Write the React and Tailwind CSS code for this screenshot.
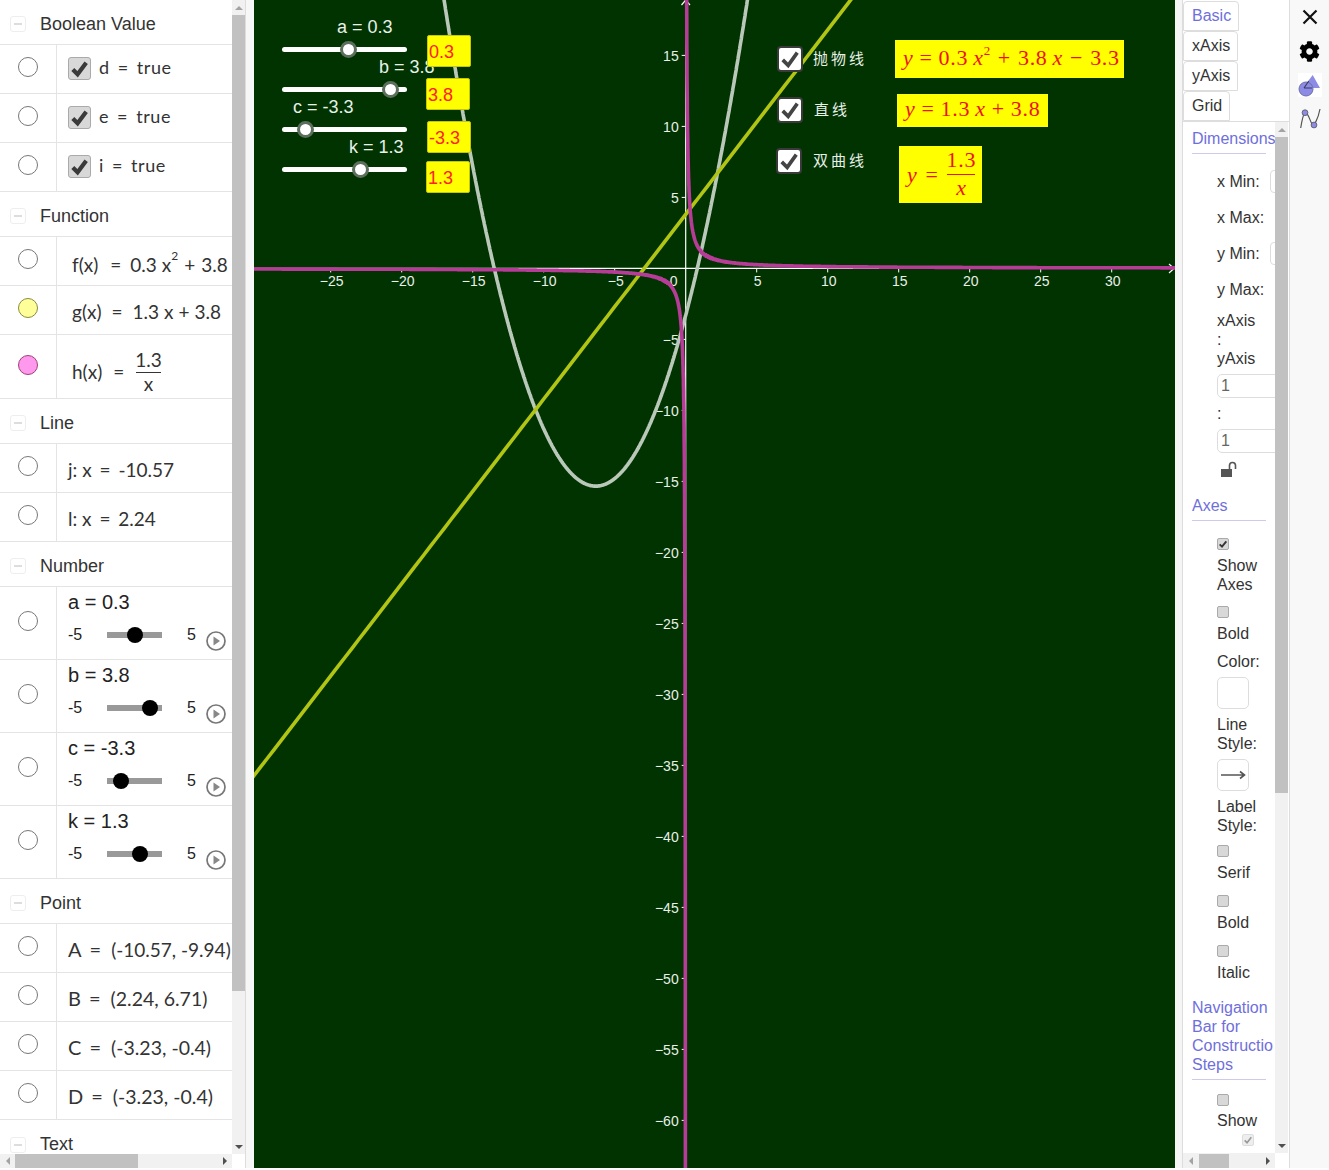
import React from "react";
import { FaCog } from "react-icons/fa";

const SX = 14.2, OX = 431.7, OY = 268.4;
const px = (u) => OX + u * SX;
const py = (v) => OY - v * SX;

function curve(f, a, b, step = 0.02) {
  const pts = [];
  for (let u = a; u <= b; u += step) {
    const v = f(u);
    if (Math.abs(v) < 200) pts.push(`${px(u).toFixed(1)},${py(v).toFixed(1)}`);
  }
  return "M" + pts.join("L");
}

function Radio({ fill = "bg-white", border = "border-[#777]" }) {
  return <div className={`w-5 h-5 rounded-full border ${border} ${fill}`} />;
}

function MiniCheck({ on, className = "" }) {
  return (
    <div className={`w-[12px] h-[12px] rounded-[2px] border border-[#aaa] bg-[#d8d8d8] flex items-center justify-center ${className}`}>
      {on && (
        <svg viewBox="0 0 12 12" className="w-[10px] h-[10px]">
          <path d="M2 6.5 L4.8 9.2 L10 2.8" fill="none" stroke="#333" strokeWidth="2.2" />
        </svg>
      )}
    </div>
  );
}

function Header({ title, height = "h-[45px]", pad = "pt-[4px]" }) {
  return (
    <div className={`${height} ${pad} flex items-center border-b border-[#e4e4e4] shrink-0`}>
      <div className="ml-[10px] w-[16px] h-[16px] rounded-[3px] border border-[#eee] flex items-center justify-center">
        <div className="w-[8px] h-[2px] bg-[#ddd]" />
      </div>
      <span className="ml-[14px] text-[18px] text-[#333]">{title}</span>
    </div>
  );
}

function Row({ height = "h-[49px]", radio, radioMt = "mt-[-4px]", children }) {
  return (
    <div className={`${height} flex border-b border-[#e4e4e4] shrink-0`}>
      <div className="w-[57px] border-r border-[#e4e4e4] flex items-center justify-center shrink-0">
        <div className={radioMt}>{radio || <Radio />}</div>
      </div>
      <div className="flex-1 min-w-0 overflow-hidden">{children}</div>
    </div>
  );
}

const mathFont = "font-['Lato'] text-[#333] whitespace-nowrap";

function BoolRow({ name }) {
  return (
    <Row>
      <div className="h-full flex items-center pl-[11px]">
        <div className="w-[23px] h-[23px] rounded-[3px] border border-[#aaa] bg-[#d8d8d8] flex items-center justify-center mt-[-2px] shrink-0">
          <svg viewBox="0 0 22 22" className="w-[21px] h-[21px]">
            <path d="M4 12 L9 17 L18 5" fill="none" stroke="#3a3a3a" strokeWidth="4.4" />
          </svg>
        </div>
        <span className={`${mathFont} text-[18px] ml-[8px] mt-[-4px] tracking-[0.6px]`}>
          {name}
          <span className="mx-[8px]">=</span>
          true
        </span>
      </div>
    </Row>
  );
}

function SliderRow({ label, pos }) {
  return (
    <Row height="h-[73px]">
      <div className="relative h-full pl-[11px]">
        <div className="text-[20px] leading-[23px] mt-[4px] text-[#222]">{label}</div>
        <div className="flex items-center mt-[11px] h-[19px] text-[16px] text-[#222]">
          <span className="w-[39px]">-5</span>
          <div className="relative w-[55px] h-[6px] bg-[#999]">
            <div className="absolute top-[-5px] w-[16px] h-[16px] rounded-full bg-black" style={{ left: pos - 8 }} />
          </div>
          <span className="ml-[25px]">5</span>
          <svg viewBox="0 0 20 20" className="w-[20px] h-[20px] ml-[10px] mt-[12px]">
            <circle cx="10" cy="10" r="9" fill="white" stroke="#777" strokeWidth="1.7" />
            <path d="M7.5 5.5 L14 10 L7.5 14.5 Z" fill="#888" />
          </svg>
        </div>
      </div>
    </Row>
  );
}

function PointRow({ name, val, valClass = "text-[19.5px]" }) {
  return (
    <Row>
      <div className={`h-full flex items-center pl-[11px] ${mathFont} text-[20px]`}>
        <span className="mt-[2px]">
          {name}
          <span className="ml-[8px] mr-[10px]">=</span>
          <span className={valClass}>{val}</span>
        </span>
      </div>
    </Row>
  );
}

function FuncText({ children, mt = "mt-[8px]" }) {
  return <div className={`h-full flex items-center pl-[15px] ${mathFont} text-[19px]`}><span className={mt}>{children}</span></div>;
}

function VScroll({ thumbH }) {
  return (
    <div className="relative w-[13px] h-full bg-[#f1f1f1] shrink-0 flex flex-col">
      <div className="h-[15px] flex items-center justify-center shrink-0">
        <div className="w-0 h-0 border-x-[4px] border-x-transparent border-b-[4px] border-b-[#a3a3a3]" />
      </div>
      <div className="bg-[#c1c1c1] shrink-0" style={{ height: thumbH }} />
      <div className="flex-1" />
      <div className="h-[15px] flex items-center justify-center shrink-0">
        <div className="w-0 h-0 border-x-[4px] border-x-transparent border-t-[4px] border-t-[#505050]" />
      </div>
    </div>
  );
}

function HScroll({ thumbLeft, thumbW }) {
  return (
    <div className="h-full flex items-center bg-[#f1f1f1]">
      <div className="flex items-center justify-center shrink-0" style={{ width: thumbLeft }}>
        <div className="w-0 h-0 border-y-[4px] border-y-transparent border-r-[4px] border-r-[#a3a3a3]" />
      </div>
      <div className="h-[14px] bg-[#c1c1c1] shrink-0" style={{ width: thumbW }} />
      <div className="flex-1" />
      <div className="w-[15px] flex items-center justify-center shrink-0">
        <div className="w-0 h-0 border-y-[4px] border-y-transparent border-l-[4px] border-l-[#505050]" />
      </div>
    </div>
  );
}

function LeftPanel() {
  return (
    <div className="w-[246px] shrink-0 h-full flex flex-col border-r border-[#ddd]">
      <div className="flex flex-1 min-h-0">
        <div className="w-[232px] h-full overflow-hidden flex flex-col shrink-0 bg-white">
          <Header title="Boolean Value" />
          <BoolRow name="d" />
          <BoolRow name="e" />
          <BoolRow name="i" />
          <Header title="Function" />
          <Row>
            <FuncText>
              <span className="mr-[12px]">f(x)</span>
              <span className="mr-[9px]">=</span>
              0.3 x<sup className="text-[12px] align-[6px] leading-none">2</sup>
              <span className="mx-[6px]">+</span>3.8
            </FuncText>
          </Row>
          <Row radio={<Radio fill="bg-[#ffff99]" border="border-[#8a8a40]" />}>
            <FuncText mt="mt-[4px]">
              <span className="mr-[10px]">g(x)</span>
              <span className="mr-[10px]">=</span>
              1.3 x<span className="mx-[5px]">+</span>3.8
            </FuncText>
          </Row>
          <Row height="h-[64px]" radio={<Radio fill="bg-[#ff99ee]" border="border-[#a0407a]" />}>
            <div className={`h-full flex items-center pl-[15px] ${mathFont} text-[19px]`}>
              <span className="mr-[11px] mt-[12px]">h(x)</span>
              <span className="mr-[11px] mt-[12px]">=</span>
              <div className="flex flex-col items-center mt-[8px]">
                <span className="leading-[25px]">1.3</span>
                <div className="w-[25px] h-px bg-[#333]" />
                <span className="leading-[22px]">x</span>
              </div>
            </div>
          </Row>
          <Header title="Line" />
          <Row><div className={`h-full flex items-center pl-[11px] ${mathFont} text-[19px]`}><span className="mt-[4px]">j: x <span className="mx-[3px]">=</span> -10.57</span></div></Row>
          <Row><div className={`h-full flex items-center pl-[11px] ${mathFont} text-[19px]`}><span className="mt-[4px]">l: x <span className="mx-[3px]">=</span> 2.24</span></div></Row>
          <Header title="Number" />
          <SliderRow label="a = 0.3" pos={28} />
          <SliderRow label="b = 3.8" pos={42.5} />
          <SliderRow label="c = -3.3" pos={14} />
          <SliderRow label="k = 1.3" pos={32.5} />
          <Header title="Point" />
          <PointRow name="A" val="(-10.57, -9.94)" valClass="text-[19px]" />
          <PointRow name="B" val="(2.24, 6.71)" />
          <PointRow name="C" val="(-3.23, -0.4)" />
          <PointRow name="D" val="(-3.23, -0.4)" />
          <Header title="Text" height="h-[48px]" pad="pt-[2px]" />
        </div>
        <VScroll thumbH={976} />
      </div>
      <div className="h-[14px] flex shrink-0">
        <div className="w-[232px]"><HScroll thumbLeft={15} thumbW={123} /></div>
      </div>
    </div>
  );
}

function YellowBox({ children, className }) {
  return <div className={`absolute bg-[#ffff00] border border-[#c8c800] rounded-[2px] text-[#ff2020] text-[18px] leading-[32px] pl-[1px] ${className}`}>{children}</div>;
}

function CanvasSlider({ top, knob }) {
  return (
    <div className="absolute left-[28px] w-[125px] h-[5px] rounded-full bg-white" style={{ top }}>
      <div className="absolute top-[-6px] w-[17px] h-[17px] rounded-full bg-white border-[3px] border-[#5c6f5c]" style={{ left: knob - 8.5 }} />
    </div>
  );
}

function CanvasCheck({ className }) {
  return (
    <div className={`absolute w-[26px] h-[26px] rounded-[4px] bg-white border-[2px] border-[#3a3a3a] flex items-center justify-center ${className}`}>
      <svg viewBox="0 0 22 22" className="w-[20px] h-[20px]">
        <path d="M3 12 L9 18 L19 4" fill="none" stroke="#444" strokeWidth="4" />
      </svg>
    </div>
  );
}

const eq = "font-['Liberation_Serif'] text-[#f01010] text-[22px] tracking-[0.7px] whitespace-nowrap";
const cjk = "absolute font-['Noto_Sans_CJK_SC',sans-serif] text-[15px] tracking-[3px] text-[#e8f0e8] whitespace-nowrap leading-[20px]";

function Graph() {
  const xt = [-25, -20, -15, -10, -5, 5, 10, 15, 20, 25, 30];
  const yt = [15, 10, 5, -5, -10, -15, -20, -25, -30, -35, -40, -45, -50, -55, -60];
  const neg = (n) => (n < 0 ? "\u2212" + -n : "" + n);
  return (
    <div className="relative w-[921px] h-full bg-[#003300] overflow-hidden shrink-0">
      <svg className="absolute inset-0" width="921" height="1168" viewBox="0 0 921 1168">
        <line x1="0" y1={OY} x2="921" y2={OY} stroke="white" strokeWidth="1.2" />
        <line x1={OX} y1="0" x2={OX} y2="1168" stroke="white" strokeWidth="1.2" />
        <path d="M915 264 L920 268.4 L915 273" fill="none" stroke="white" strokeWidth="1.2" />
        <path d="M427.5 5 L431.7 0 L436 5" fill="none" stroke="white" strokeWidth="1.2" />
        {xt.map((n) => (
          <g key={n}>
            <line x1={px(n)} x2={px(n)} y1={OY} y2={OY + 4} stroke="white" />
            <text x={px(n) + 1} y={OY + 18} fill="#e8f0e8" fontSize="14" fontFamily="Liberation Sans" textAnchor="middle">{neg(n)}</text>
          </g>
        ))}
        <text x={OX - 12} y={OY + 18} fill="#e8f0e8" fontSize="14" fontFamily="Liberation Sans" textAnchor="middle">0</text>
        {yt.map((n) => (
          <g key={n}>
            <line x1={OX - 4} x2={OX} y1={py(n)} y2={py(n)} stroke="white" />
            <text x={OX - 7} y={py(n) + 6} fill="#e8f0e8" fontSize="14" fontFamily="Liberation Sans" textAnchor="end">{neg(n)}</text>
          </g>
        ))}
        <path d={curve((u) => 0.3 * u * u + 3.8 * u - 3.3, -31, 31)} fill="none" stroke="#b9c8b9" strokeWidth="3.6" />
        <path d={curve((u) => 1.3 * u + 3.8, -31, 31, 0.5)} fill="none" stroke="#b2c414" strokeWidth="3.6" />
        <path d={curve((u) => 1.3 / u, -31, -0.005, 0.005)} fill="none" stroke="#b63c98" strokeWidth="3.6" />
        <path d={curve((u) => 1.3 / u, 0.005, 35, 0.005)} fill="none" stroke="#b63c98" strokeWidth="3.6" />
      </svg>

      <span className="absolute left-[83px] top-[17px] text-[18px] leading-[21px] text-[#e8f0e8]">a = 0.3</span>
      <span className="absolute left-[125px] top-[57px] text-[18px] leading-[21px] text-[#e8f0e8]">b = 3.8</span>
      <span className="absolute left-[39px] top-[97px] text-[18px] leading-[21px] text-[#e8f0e8]">c = -3.3</span>
      <span className="absolute left-[95px] top-[137px] text-[18px] leading-[21px] text-[#e8f0e8]">k = 1.3</span>
      <CanvasSlider top={47} knob={66} />
      <CanvasSlider top={87} knob={108} />
      <CanvasSlider top={127} knob={23} />
      <CanvasSlider top={167} knob={78} />
      <YellowBox className="left-[173px] top-[35px] w-[44px] h-[32px]">0.3</YellowBox>
      <YellowBox className="left-[172px] top-[78px] w-[44px] h-[32px]">3.8</YellowBox>
      <YellowBox className="left-[173px] top-[121px] w-[44px] h-[32px]">-3.3</YellowBox>
      <YellowBox className="left-[172px] top-[161px] w-[44px] h-[32px]">1.3</YellowBox>

      <CanvasCheck className="left-[523px] top-[46px]" />
      <CanvasCheck className="left-[523px] top-[97px]" />
      <CanvasCheck className="left-[522px] top-[148px]" />
      <span className={`${cjk} left-[559px] top-[48px]`}>抛物线</span>
      <span className={`${cjk} left-[560px] top-[99px]`}>直线</span>
      <span className={`${cjk} left-[559px] top-[150px]`}>双曲线</span>

      <div className={`absolute left-[641px] top-[40px] w-[229px] h-[38px] bg-[#ffff00] flex items-center pl-[8px] pb-[4px] ${eq}`}>
        <i>y</i><span className="mx-[6px]">=</span>0.3<i className="ml-[5px]">x</i><sup className="text-[13px] leading-none align-[8px]">2</sup><span className="mx-[7px]">+</span>3.8<i className="ml-[5px]">x</i><span className="mx-[7px]">−</span>3.3
      </div>
      <div className={`absolute left-[643px] top-[94px] w-[151px] h-[33px] bg-[#ffff00] flex items-center pl-[8px] pb-[4px] ${eq}`}>
        <i>y</i><span className="mx-[6px]">=</span>1.3<i className="ml-[5px]">x</i><span className="mx-[6px]">+</span>3.8
      </div>
      <div className={`absolute left-[645px] top-[146px] w-[83px] h-[57px] bg-[#ffff00] flex items-center pl-[8px] ${eq}`}>
        <i>y</i><span className="mx-[8px]">=</span>
        <div className="flex flex-col items-center">
          <span className="leading-[21px] mb-[4px]">1.3</span>
          <div className="w-[28px] h-px bg-[#f01010]" />
          <i className="leading-[25px]">x</i>
        </div>
      </div>
    </div>
  );
}

const title = "text-[#6f6fdc] text-[16px] leading-[19px]";
const lab = "text-[16px] leading-[19px] text-[#333] ml-[34px] whitespace-nowrap";

function Title({ lines, mt }) {
  return (
    <div className={`ml-[9px] ${mt}`}>
      {lines.map((l) => (
        <div key={l} className={`${title} whitespace-nowrap`}>{l}</div>
      ))}
      <div className="w-[74px] h-px bg-[#cdcaec] mt-[5px]" />
    </div>
  );
}

function DimRow({ text, box }) {
  return (
    <div className="h-[36px] flex items-center relative">
      <span className={lab}>{text}</span>
      {box && <div className="absolute left-[87px] top-[7px] w-[20px] h-[23px] rounded-[4px] border border-[#ddd] bg-white" />}
    </div>
  );
}

function InputBox({ mt }) {
  return (
    <div className={`ml-[34px] ${mt} w-[70px] h-[24px] rounded-[5px] border border-[#ddd] bg-white text-[16px] leading-[22px] text-[#666] pl-[3px]`}>1</div>
  );
}

function RightPanel() {
  return (
    <div className="flex-1 h-full flex min-w-0">
      <div className="w-[8px] shrink-0 bg-[#f5f5f5] border-r border-[#ddd]" />
      <div className="w-[107px] shrink-0 h-full flex flex-col pt-[1px] bg-white border-r border-[#ddd]">
        {[["Basic", "w-[56px]", "text-[#6f6fdc]"], ["xAxis", "w-[55px]", "text-[#333]"], ["yAxis", "w-[55px]", "text-[#333]"], ["Grid", "w-[47px]", "text-[#333]"]].map(([t, w, c]) => (
          <div key={t} className={`h-[30px] ${w} border border-[#ddd] rounded-t-[4px] flex items-center pl-[8px] text-[16px] ${c} shrink-0`}>{t}</div>
        ))}
        <div className="flex-1 min-h-0 border-t border-[#ddd] flex flex-col bg-white">
          <div className="flex flex-1 min-h-0">
            <div className="w-[92px] shrink-0 overflow-hidden pt-[7px]">
              <Title lines={["Dimensions"]} mt="" />
              <div className="mt-[9px]">
                <DimRow text="x Min:" box />
                <DimRow text="x Max:" />
                <DimRow text="y Min:" box />
                <DimRow text="y Max:" />
              </div>
              <div className={`${lab} mt-[4px]`}>xAxis</div>
              <div className={lab}>:</div>
              <div className={lab}>yAxis</div>
              <InputBox mt="mt-[6px]" />
              <div className={`${lab} mt-[6px]`}>:</div>
              <InputBox mt="mt-[6px]" />
              <svg viewBox="0 0 17 17" className="w-[17px] h-[17px] ml-[37px] mt-[8px]">
                <rect x="1" y="8" width="11" height="8" fill="#555" />
                <path d="M9.5 8 V4.5 a3 3 0 0 1 6 0 V8" fill="none" stroke="#555" strokeWidth="1.6" />
              </svg>
              <Title lines={["Axes"]} mt="mt-[18px]" />
              <MiniCheck on className="ml-[34px] mt-[17px]" />
              <div className={`${lab} mt-[6px]`}>Show</div>
              <div className={lab}>Axes</div>
              <MiniCheck className="ml-[34px] mt-[12px]" />
              <div className={`${lab} mt-[6px]`}>Bold</div>
              <div className={`${lab} mt-[9px]`}>Color:</div>
              <div className="ml-[34px] mt-[6px] w-[32px] h-[32px] rounded-[5px] border border-[#ddd] bg-white" />
              <div className={`${lab} mt-[6px]`}>Line</div>
              <div className={lab}>Style:</div>
              <div className="ml-[34px] mt-[6px] w-[32px] h-[32px] rounded-[5px] border border-[#ddd] bg-white flex items-center justify-center">
                <svg viewBox="0 0 26 12" className="w-[26px] h-[12px]">
                  <path d="M1 6 H24 M20 2.5 L24.5 6 L20 9.5" fill="none" stroke="#555" strokeWidth="1.6" />
                </svg>
              </div>
              <div className={`${lab} mt-[6px]`}>Label</div>
              <div className={lab}>Style:</div>
              <MiniCheck className="ml-[34px] mt-[10px]" />
              <div className={`${lab} mt-[6px]`}>Serif</div>
              <MiniCheck className="ml-[34px] mt-[13px]" />
              <div className={`${lab} mt-[6px]`}>Bold</div>
              <MiniCheck className="ml-[34px] mt-[13px]" />
              <div className={`${lab} mt-[6px]`}>Italic</div>
              <Title lines={["Navigation", "Bar for", "Constructio", "Steps"]} mt="mt-[16px]" />
              <MiniCheck className="ml-[34px] mt-[14px]" />
              <div className={`${lab} mt-[5px]`}>Show</div>
              <div className="ml-[59px] mt-[4px] w-[12px] h-[12px] rounded-[2px] border border-[#ddd] bg-[#eee] flex items-center justify-center">
                <svg viewBox="0 0 12 12" className="w-[10px] h-[10px]">
                  <path d="M2 6.5 L4.8 9.2 L10 2.8" fill="none" stroke="#999" strokeWidth="2" />
                </svg>
              </div>
            </div>
            <VScroll thumbH={656} />
          </div>
          <div className="h-[15px] shrink-0 flex">
            <div className="w-[92px]"><HScroll thumbLeft={16} thumbW={30} /></div>
          </div>
        </div>
      </div>
      <div className="flex-1 h-full bg-[#f8f8f8] flex flex-col items-center min-w-0">
        <div className="h-[34px] flex items-center justify-center shrink-0">
          <svg viewBox="0 0 16 16" className="w-[16px] h-[16px]">
            <path d="M1.5 1.5 L14.5 14.5 M14.5 1.5 L1.5 14.5" stroke="#111" strokeWidth="2.2" />
          </svg>
        </div>
        <div className="h-[34px] flex items-center justify-center shrink-0">
          <FaCog className="w-[21px] h-[21px] text-black" />
        </div>
        <div className="h-[34px] flex items-center justify-center shrink-0">
          <svg viewBox="0 0 24 24" className="w-[24px] h-[24px] bg-white">
            <path d="M14.7 2 L22 15 H5 Z" fill="#8c8ce6" />
            <circle cx="8" cy="16" r="7" fill="#8c8ce6" stroke="#6e6ea8" strokeWidth="1" />
            <path d="M6 15 H14 M6 15 L10.8 8" fill="none" stroke="#3a3a5a" strokeWidth="1.1" />
          </svg>
        </div>
        <div className="h-[34px] flex items-center justify-center shrink-0">
          <svg viewBox="0 0 24 24" className="w-[24px] h-[24px]">
            <path d="M2.7 21 C4 13 5 7 7 5.7 C10 5 12 14 14 17 C16 20 20 12 22 2" fill="none" stroke="#555" strokeWidth="1.2" />
            <circle cx="7" cy="5.7" r="2.9" fill="#8c8ce6" stroke="#555" strokeWidth="0.8" />
            <circle cx="16" cy="18" r="2.9" fill="#8c8ce6" stroke="#555" strokeWidth="0.8" />
          </svg>
        </div>
      </div>
    </div>
  );
}

export default function App() {
  return (
    <div className="w-[1329px] h-[1170px] bg-white font-['Liberation_Sans',sans-serif] overflow-hidden">
      <div className="h-[1168px] flex">
        <LeftPanel />
        <div className="w-[8px] shrink-0 bg-[#f7f7f7]" />
        <Graph />
        <RightPanel />
      </div>
    </div>
  );
}
